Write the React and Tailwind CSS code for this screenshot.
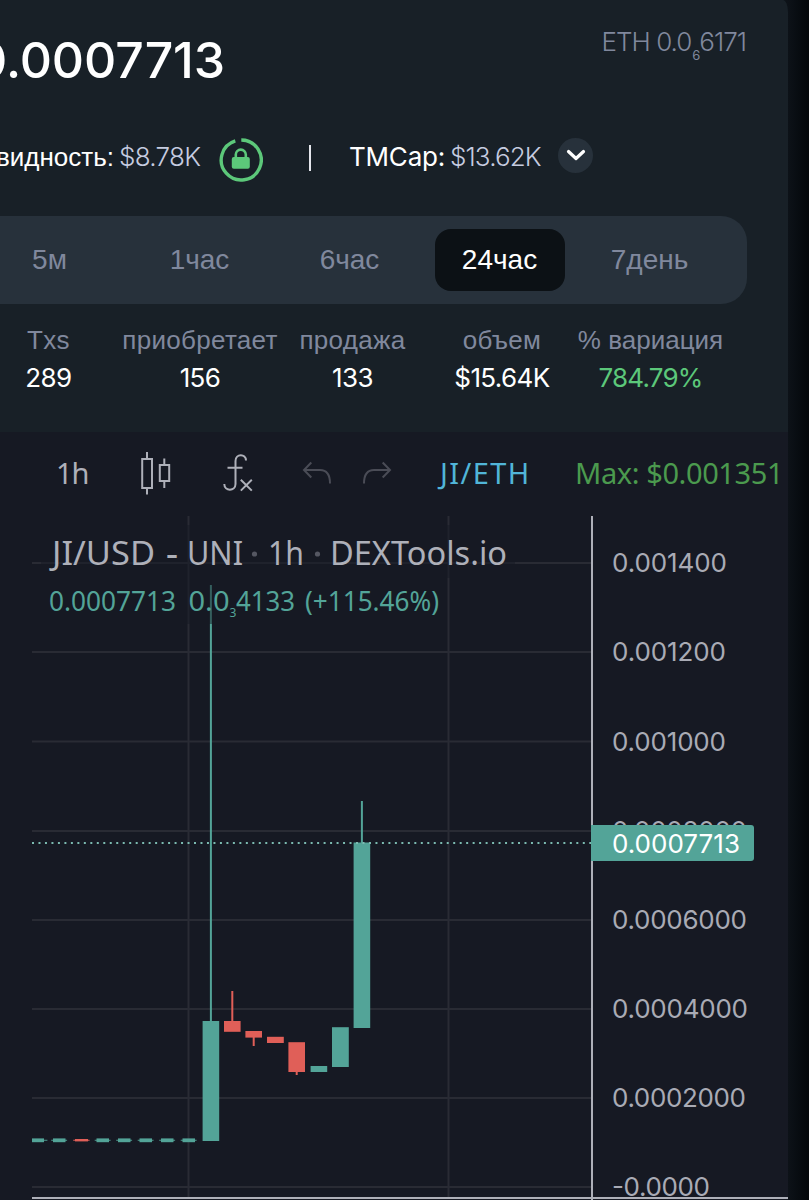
const periods = ['5м', '1час', '6час', '24час', '7день']

const stats = [
  { label: 'Txs', value: '289' },
  { label: 'приобретает', value: '156' },
  { label: 'продажа', value: '133' },
  { label: 'объем', value: '$15.64K' },
  { label: '% вариация', value: '784.79%', up: true },
]

const GREEN = '#53a498'
const RED = '#e05f58'

const gridRows = [563, 652, 741.5, 831, 920, 1009, 1098, 1187]
const gridCols = [188.5, 448.5]

const axisLabels = [
  { y: 571.5, text: '0.001400', w: 114 },
  { y: 661, text: '0.001200', w: 113 },
  { y: 750.5, text: '0.001000', w: 113 },
  { y: 840, text: '0.0008000', w: 134 },
  { y: 929, text: '0.0006000', w: 134 },
  { y: 1018, text: '0.0004000', w: 135 },
  { y: 1107, text: '0.0002000', w: 133 },
  { y: 1196, text: '-0.0000', w: 97 },
]

// body from top to bottom, wick from high to low
const candles = [
  { x: 202.6, w: 16.6, top: 1021, bottom: 1141, high: 585, low: 1141, color: GREEN },
  { x: 224, w: 16.6, top: 1021, bottom: 1031.8, high: 991, low: 1031, color: RED },
  { x: 245.4, w: 16.6, top: 1031, bottom: 1037.6, high: 1031, low: 1046, color: RED },
  { x: 267, w: 16.8, top: 1036.8, bottom: 1043, high: 1037, low: 1043, color: RED },
  { x: 288.4, w: 16.6, top: 1042.2, bottom: 1072, high: 1043, low: 1075, color: RED },
  { x: 310.6, w: 16.6, top: 1066, bottom: 1072, high: 1066, low: 1072, color: GREEN },
  { x: 332, w: 16.8, top: 1027.2, bottom: 1067, high: 1028, low: 1067, color: GREEN },
  { x: 353.6, w: 16.6, top: 842.5, bottom: 1028, high: 801, low: 1028, color: GREEN },
]

const flat = [
  { x: 32, w: 12, color: GREEN },
  { x: 53, w: 12.5, color: GREEN },
  { x: 75, w: 13, color: RED },
  { x: 96.5, w: 12.5, color: GREEN },
  { x: 118, w: 12.5, color: GREEN },
  { x: 139.5, w: 12.5, color: GREEN },
  { x: 161, w: 12.5, color: GREEN },
  { x: 182.5, w: 12.5, color: GREEN },
]

function LockBadge() {
  return (
    <svg width="44" height="44" viewBox="0 0 44 44" className="mt-1 -ml-px shrink-0">
      <path d="M22.3 2 A20 20 0 1 1 16.3 2.9" fill="none" stroke="#5cc87a" strokeWidth="3.4" />
      <rect x="12.8" y="19" width="18" height="11.8" rx="2" fill="#5cc87a" />
      <path d="M16.8 20 V16.6 a5 5 0 0 1 10 0 V20" fill="none" stroke="#5cc87a" strokeWidth="2.6" />
    </svg>
  )
}

function ToolbarIcons() {
  return (
    <svg width="270" height="50" viewBox="130 449 270 50" fill="none" className="shrink-0">
      <g stroke="#aeb0b9" strokeWidth="2">
        <path d="M147 452 V459 M147 488 V494.5 M142.2 459 H152 V488 H142.2 Z" />
        <path d="M164.3 458.5 V465 M164.3 481 V488 M159.8 465 H169.2 V481 H159.8 Z" />
        <path d="M246 460.5 C246 453.5 235.5 453.5 235.5 461 V484 C235.5 491.5 224.3 491.5 224.3 484 M227.5 467.8 H242.5" />
        <path d="M240.8 479.8 L251.8 490.6 M251.8 479.8 L240.8 490.6" />
      </g>
      <g stroke="#4a4c56" strokeWidth="2">
        <path d="M311.3 462.5 L304 470 L311.3 477.5 M304 470 H320 C326 470 330 474 330 483.5" />
        <path d="M382.7 462.5 L390 470 L382.7 477.5 M390 470 H374 C368 470 364 474 364 483.5" />
      </g>
    </svg>
  )
}

function Chart() {
  return (
    <svg width="788" height="684" viewBox="0 516 788 684" className="block">
      <g fill="#292b34">
        {gridRows.map(y => <rect key={y} x="32" y={y - 1} width="560" height="2" />)}
        {gridCols.map(x => <rect key={x} x={x - 1} y="516" width="2" height="682" />)}
      </g>

      {candles.map(c => (
        <g key={c.x} fill={c.color}>
          <rect x={c.x + c.w / 2 - 1} y={c.high} width="2" height={c.low - c.high} />
          <rect x={c.x} y={c.top} width={c.w} height={c.bottom - c.top} />
        </g>
      ))}

      {flat.map(c => (
        <g key={c.x} fill={c.color}>
          <rect x={Math.max(32, c.x - 1.8)} y="1139.8" width={c.w + 3.4} height="0.9" />
          <rect x={c.x} y={c.color === RED ? 1139 : 1138.4} width={c.w} height={c.color === RED ? 2.4 : 3.8} />
        </g>
      ))}

      <path d="M32 843 H591" stroke="#7bbab0" strokeWidth="2" strokeDasharray="2 4.48" />

      {/* legend backdrop */}
      <rect x="41" y="525" width="474" height="53" fill="#161923" opacity="0.5" />
      <rect x="41" y="578" width="405" height="46" fill="#161923" opacity="0.5" />

      <g fontFamily="'Noto Sans', 'Open Sans', sans-serif">
        <g fill="#aeb0b9" fontSize="33">
          <text x="52" y="564.5" textLength="103" lengthAdjust="spacingAndGlyphs">JI/USD</text>
          <text x="166" y="564.5" textLength="12" lengthAdjust="spacingAndGlyphs" fontWeight="500">-</text>
          <text x="187" y="564.5" textLength="56" lengthAdjust="spacingAndGlyphs">UNI</text>
          <text x="268" y="564.5" textLength="36" lengthAdjust="spacingAndGlyphs">1h</text>
          <text x="330" y="564.5" textLength="177" lengthAdjust="spacingAndGlyphs">DEXTools.io</text>
        </g>
        <circle cx="254.5" cy="554" r="2.6" fill="#555762" />
        <circle cx="317.5" cy="554" r="2.6" fill="#555762" />
        <g fill={GREEN} fontSize="28">
          <text x="49" y="611" textLength="127" lengthAdjust="spacingAndGlyphs">0.0007713</text>
          <text x="188.5" y="611" textLength="41" lengthAdjust="spacingAndGlyphs">0.0</text>
          <text x="229.5" y="617" fontSize="12">3</text>
          <text x="236" y="611" textLength="59" lengthAdjust="spacingAndGlyphs">4133</text>
          <text x="305" y="611" textLength="134" lengthAdjust="spacingAndGlyphs">(+115.46%)</text>
        </g>
      </g>

      <rect x="591" y="516" width="2" height="684" fill="#aeb0b9" />
      <rect x="32" y="1197" width="756" height="2" fill="#aeb0b9" />

      <g fontFamily="Inter, sans-serif" fontSize="26" fill="#a9abb5">
        {axisLabels.map(l => (
          <text key={l.text} x="612" y={l.y} textLength={l.w + 1}>{l.text}</text>
        ))}
        <path d="M591 825 H751 a3 3 0 0 1 3 3 V858 a3 3 0 0 1 -3 3 H591 Z" fill={GREEN} />
        <text x="612" y="852.5" textLength="128" fill="#fff">0.0007713</text>
      </g>
    </svg>
  )
}

export default function App() {
  return (
    <div className="w-[809px] h-[1200px] overflow-hidden bg-[#04070a]">
      <div className="flex h-full bg-linear-to-r from-[#0d1218] from-[97.4%] to-[#04070a]">
        <div className="w-[788px] h-full overflow-hidden rounded-tr-[5px_12px] bg-[#182027] font-[Inter,'Liberation_Sans',sans-serif]">
          <div className="flex h-[120px] items-start justify-between pr-[42px]">
            <div className="flex w-[225px] justify-end pt-[35px] text-[50px] leading-[50px] font-medium tracking-[-0.1px] whitespace-nowrap text-white">0.0007713</div>
            <div className="flex pt-[29px] text-[26px] leading-[26px] font-light tracking-[-1px] whitespace-nowrap text-[#80889d]">
              ETH 0.0<span className="ml-px pt-[13px] text-[13px] font-normal">6</span>6171
            </div>
          </div>

          <div className="flex h-[75px] items-center text-[26px] leading-[26px] whitespace-nowrap text-white">
            <span className="-mt-px flex w-[114px] justify-end font-['Liberation_Sans']">видность:</span>
            <span className="-mt-px ml-[5px] w-[101px] font-light tracking-[-0.7px] text-[#c6cce0]">$8.78K</span>
            <LockBadge />
            <span className="ml-[46px] h-[26px] w-0.5 bg-[#e4e6ec]" />
            <span className="-mt-px ml-[38px] w-[101px] tracking-[-0.2px]">TMCap:</span>
            <span className="-mt-px w-[108px] font-light tracking-[-0.9px] text-[#c6cce0]">$13.62K</span>
            <span className="-mt-1 flex size-[35px] items-center justify-center rounded-full bg-[#27313b]">
              <svg width="20" height="13" viewBox="0 0 20 13" fill="none" stroke="#fff" strokeWidth="3.2" strokeLinecap="round" strokeLinejoin="round">
                <path d="M2.5 2.5 L10 9.5 L17.5 2.5" />
              </svg>
            </span>
          </div>

          <div className="mt-[20.5px] flex h-[88px] w-[746.5px] items-center rounded-r-[26px] bg-[#27313b] font-['Liberation_Sans'] text-[28px] text-[#80889d]">
            <div className="-ml-[25.5px] grid w-[750px] shrink-0 grid-cols-5 justify-items-center">
              {periods.map(p => (
                <div key={p} className={p === '24час' ? 'flex h-[62px] w-[130px] items-center justify-center rounded-[16px] bg-[#0c1115] pt-px text-white' : 'flex h-[62px] w-[130px] items-center justify-center pt-px'}>
                  {p}
                </div>
              ))}
            </div>
          </div>

          <div className="-ml-[26.5px] grid h-[128.5px] w-[752px] grid-cols-[150px_153px_152px_147px_150px] pt-[17.5px] text-center text-[26px] whitespace-nowrap">
            {stats.map(s => (
              <div key={s.label} className="flex flex-col items-center">
                <div className={s.up ? "h-[38px] font-['Liberation_Sans'] leading-[38px] text-[#80889d]" : "h-[38px] font-['Liberation_Sans'] leading-[38px] tracking-[0.3px] text-[#80889d]"}>{s.label}</div>
                <div className={s.up ? 'leading-[38px] tracking-[-0.8px] text-[#5cc87a]' : 'leading-[38px] tracking-[-0.6px] text-white'}>{s.value}</div>
              </div>
            ))}
          </div>

          <div className="bg-[#161923]">
            <div className="flex h-[84px] items-center font-['Noto_Sans',sans-serif] text-[29px] whitespace-nowrap">
              <span className="-mt-0.5 w-[130px] pl-[56px] tracking-[-1px] text-[#aeb0b9]">1h</span>
              <ToolbarIcons />
              <span className="-mt-0.5 ml-[40px] w-[135px] tracking-[1.4px] text-[#51b5d8]">JI/ETH</span>
              <span className="-mt-0.5 tracking-[-0.4px] text-[#4b9a4e]">Max: $0.001351</span>
            </div>
            <Chart />
          </div>
        </div>
      </div>
    </div>
  )
}
